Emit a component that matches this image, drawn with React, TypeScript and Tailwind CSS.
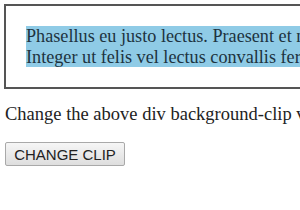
export default function App() {
  return (
    <div className="w-[300px] h-[210px] overflow-hidden bg-white font-['Liberation_Serif',serif]">
      <div className="ml-[4px] mt-[4px] w-[420px] border-2 border-[#555] p-[20px]">
        <div className="bg-[#8fcbe6] text-[18.2px] leading-[20.5px] text-[#1d3340] whitespace-nowrap">
          <div>Phasellus eu justo lectus. Praesent et nisi nec justo</div>
          <div>Integer ut felis vel lectus convallis fermentum vitae</div>
        </div>
      </div>
      <p className="ml-[5px] mt-[14px] text-[18.5px] leading-[22px] text-[#222] whitespace-nowrap">
        Change the above div background-clip value
      </p>
      <button className="block ml-[5px] mt-[17px] h-[24px] w-[120px] border border-[#a9a9a9] rounded-[2px] bg-gradient-to-b from-[#f6f6f6] to-[#dedede] font-['Liberation_Sans',sans-serif] text-[15px] text-[#222] leading-none">
        CHANGE CLIP
      </button>
    </div>
  );
}
